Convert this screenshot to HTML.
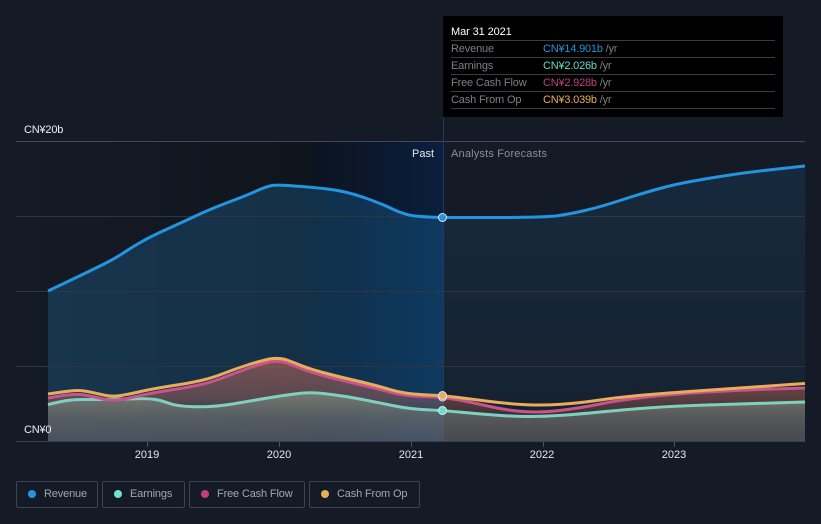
<!DOCTYPE html>
<html><head><meta charset="utf-8">
<style>
html,body{margin:0;padding:0;background:#151b26;}
body{width:821px;height:524px;overflow:hidden;position:relative;font-family:"Liberation Sans","Noto Sans CJK SC",sans-serif;}
svg{position:absolute;left:0;top:0;}
text{font-family:"Liberation Sans","Noto Sans CJK SC",sans-serif;font-size:11px;}
.b{position:absolute;top:481px;height:25px;border:1px solid #3f444e;border-radius:2px;}
.b i{position:absolute;left:11px;top:8px;width:8px;height:8px;border-radius:50%;}
.b span{position:absolute;left:27px;top:5px;font-size:11px;line-height:14px;color:#a3a6ac;white-space:nowrap;letter-spacing:-.15px;}
</style></head><body>
<svg width="821" height="524" viewBox="0 0 821 524">
<defs>
<linearGradient id="dark" x1="0" x2="1" y1="0" y2="0"><stop offset="0" stop-color="#151b26"/><stop offset="1" stop-color="#10141c"/></linearGradient>
<linearGradient id="past" x1="0" x2="1" y1="0" y2="0"><stop offset="0" stop-color="#000a19" stop-opacity=".45"/><stop offset="1" stop-color="#002352" stop-opacity=".55"/></linearGradient>
<linearGradient id="fc" x1="0" x2="0" y1="166" y2="441" gradientUnits="userSpaceOnUse"><stop offset="0" stop-color="#2394e0" stop-opacity=".12"/><stop offset="1" stop-color="#2394e0" stop-opacity=".05"/></linearGradient>
<linearGradient id="red" x1="0" x2="0" y1="358" y2="441" gradientUnits="userSpaceOnUse"><stop offset="0" stop-color="#e8785f" stop-opacity=".46"/><stop offset=".45" stop-color="#e8785f" stop-opacity=".34"/><stop offset=".68" stop-color="#e8785f" stop-opacity=".18"/><stop offset="1" stop-color="#e8785f" stop-opacity=".1"/></linearGradient>
<linearGradient id="grey" x1="0" x2="0" y1="392" y2="441" gradientUnits="userSpaceOnUse"><stop offset="0" stop-color="#7f8b7d" stop-opacity=".72"/><stop offset=".57" stop-color="#666f6c" stop-opacity=".6"/><stop offset="1" stop-color="#646870" stop-opacity=".5"/></linearGradient>
<clipPath id="cp"><rect x="48" y="141" width="395.5" height="300"/></clipPath>
<clipPath id="cf"><rect x="443.5" y="141" width="362" height="300"/></clipPath>
<path id="rf" d="M48,291 L59,285.75 Q70,280.5 82.5,274.5 Q95,268.5 105,263.5 Q115,258.5 122.5,253.5 Q130,248.5 138.5,243.5 Q147,238.5 156,234.25 Q165,230 175,225.5 Q185,221 195,216.25 Q205,211.5 215,207.5 Q225,203.5 237.5,198.75 Q250,194 257.5,190.5 Q265,187 272,185.5 Q279,184.5 294.5,186 Q310,187 327.5,189 Q345,191 362.5,197 Q380,203 392.5,209 Q405,215 415,216 Q425,217 434,217.25 Q443,217.5 494,217.5 Q545,217.5 557.5,215.75 Q570,214 585,210.5 Q600,207 620,200.5 Q640,194 657,189.25 Q674,184.5 692,181.25 Q710,178 730,175 Q750,172 777.5,169 L805,166 L805,441 L48,441 Z"/>
</defs>
<rect x="16" y="142" width="294" height="299" fill="url(#dark)"/>
<rect x="310" y="142" width="134" height="299" fill="url(#past)"/>
<!-- fills -->
<g clip-path="url(#cp)"><use href="#rf" fill="#2394e0" fill-opacity=".22"/></g>
<g clip-path="url(#cf)"><use href="#rf" fill="url(#fc)"/></g>
<!-- grid -->
<g stroke="#2f3541" stroke-width="1">
<line x1="16" x2="805" y1="216.5" y2="216.5"/>
<line x1="16" x2="805" y1="291.5" y2="291.5"/>
<line x1="16" x2="805" y1="366.5" y2="366.5"/>
</g>
<line x1="16" x2="805" y1="141.5" y2="141.5" stroke="#42485a"/>
<line x1="443.5" x2="443.5" y1="117" y2="441" stroke="#1f3a5c"/>
<path fill="url(#red)" d="M48,398 L56.5,396.5 Q65,395 72.5,394.5 Q80,394 87.5,395.5 Q95,397 103.5,399 Q112,401 121,399.5 Q130,398 138.5,396 Q147,394 158.5,392 Q170,390 180,388.5 Q190,387 201,384.5 Q212,382 223.5,377.5 Q235,373 247.5,368.5 Q260,364 269.5,362 Q279,360.5 287,363 Q295,366 302.5,369 Q310,372 325,376 Q340,380 357.5,384 Q375,388 390,392 Q405,396 424,396.5 Q443,397 456.5,399.5 Q470,402 490,406.5 Q510,411 526.5,411.75 Q543,412.5 561.5,410.25 Q580,408 600,404 Q620,400 647,397 Q674,394 707,392 Q740,390 772.5,389 L805,388 L805,441 L48,441 Z"/>
<path fill="url(#grey)" d="M48,404.5 L59,402 Q70,399.5 82.5,399.5 Q95,399.5 110,399.25 Q125,399 136,398.75 Q147,398.5 153.5,399.25 Q160,400 169,403.25 Q178,406.5 196.5,406.75 Q215,407 232.5,404 Q250,401 264.5,398.5 Q279,396 294.5,394 Q310,391.5 327.5,394 Q345,396 362.5,399.5 Q380,403 395,406 Q410,409 426.5,409.75 Q443,410.5 461.5,412.25 Q480,414 497.5,415.25 Q515,416.5 530,416.5 Q545,416.5 562.5,415.25 Q580,414 600,412 Q620,410 647,408 Q674,406 707,405 Q740,404 772.5,403 L805,402 L805,441 L48,441 Z"/>
<!-- axis -->
<line x1="16" x2="805" y1="441.5" y2="441.5" stroke="#3a404c"/>
<g stroke="#4a505c"><line x1="147.5" x2="147.5" y1="442" y2="447"/><line x1="279.5" x2="279.5" y1="442" y2="447"/><line x1="411.5" x2="411.5" y1="442" y2="447"/><line x1="543.5" x2="543.5" y1="442" y2="447"/><line x1="674.5" x2="674.5" y1="442" y2="447"/></g>
<!-- lines -->
<g fill="none" stroke-width="3" stroke-linejoin="round" stroke-linecap="butt">
<path stroke="#2394e0" d="M48,291 L59,285.75 Q70,280.5 82.5,274.5 Q95,268.5 105,263.5 Q115,258.5 122.5,253.5 Q130,248.5 138.5,243.5 Q147,238.5 156,234.25 Q165,230 175,225.5 Q185,221 195,216.25 Q205,211.5 215,207.5 Q225,203.5 237.5,198.75 Q250,194 257.5,190.5 Q265,187 272,185.5 Q279,184.5 294.5,186 Q310,187 327.5,189 Q345,191 362.5,197 Q380,203 392.5,209 Q405,215 415,216 Q425,217 434,217.25 Q443,217.5 494,217.5 Q545,217.5 557.5,215.75 Q570,214 585,210.5 Q600,207 620,200.5 Q640,194 657,189.25 Q674,184.5 692,181.25 Q710,178 730,175 Q750,172 777.5,169 L805,166"/>
<path stroke="#7fd0bd" d="M48,404.5 L59,402 Q70,399.5 82.5,399.5 Q95,399.5 110,399.25 Q125,399 136,398.75 Q147,398.5 153.5,399.25 Q160,400 169,403.25 Q178,406.5 196.5,406.75 Q215,407 232.5,404 Q250,401 264.5,398.5 Q279,396 294.5,394 Q310,391.5 327.5,394 Q345,396 362.5,399.5 Q380,403 395,406 Q410,409 426.5,409.75 Q443,410.5 461.5,412.25 Q480,414 497.5,415.25 Q515,416.5 530,416.5 Q545,416.5 562.5,415.25 Q580,414 600,412 Q620,410 647,408 Q674,406 707,405 Q740,404 772.5,403 L805,402"/>
<path stroke="#c9548b" d="M48,398 L56.5,396.5 Q65,395 72.5,394.5 Q80,394 87.5,395.5 Q95,397 103.5,399 Q112,401 121,399.5 Q130,398 138.5,396 Q147,394 158.5,392 Q170,390 180,388.5 Q190,387 201,384.5 Q212,382 223.5,377.5 Q235,373 247.5,368.5 Q260,364 269.5,362 Q279,360.5 287,363 Q295,366 302.5,369 Q310,372 325,376 Q340,380 357.5,384 Q375,388 390,392 Q405,396 424,396.5 Q443,397 456.5,399.5 Q470,402 490,406.5 Q510,411 526.5,411.75 Q543,412.5 561.5,410.25 Q580,408 600,404 Q620,400 647,397 Q674,394 707,392 Q740,390 772.5,389 L805,388"/>
<path stroke="#e8ad5a" d="M48,394 L56.5,392.75 Q65,391.5 72.5,390.75 Q80,390 87.5,391.5 Q95,393 103.5,395 Q112,397 121,395.5 Q130,394 138.5,392 Q147,390 158.5,388 Q170,386 180,384.5 Q190,383 201,380.5 Q212,378 223.5,373.5 Q235,369 247.5,365 Q260,361 269.5,359 Q279,357.5 287,360 Q295,363 302.5,366 Q310,369 325,373 Q340,377 357.5,381 Q375,385 390,389.5 Q405,394 424,394.75 Q443,395.5 456.5,397.25 Q470,399 490,401.5 Q510,404 526.5,404.75 Q543,405.5 561.5,404.25 Q580,403 600,400 Q620,397 647,394.75 Q674,392.5 707,390.25 Q740,388 772.5,385.75 L805,383.5"/>
</g>
<!-- markers -->
<circle cx="442.5" cy="217.5" r="4" fill="#2394e0" stroke="#dfe8f2" stroke-width="1"/>
<circle cx="442.5" cy="397" r="4" fill="#c9548b" stroke="#dfe0ee" stroke-width="1"/>
<circle cx="442.5" cy="395.5" r="4" fill="#e8ad5a" stroke="#dfe0e0" stroke-width="1"/>
<circle cx="442.5" cy="410.5" r="4" fill="#62e0d2" stroke="#dff0f0" stroke-width="1"/>
<!-- labels -->
<text x="24" y="133" fill="#eceef0" letter-spacing="-.2">CN¥20b</text>
<text x="24" y="433" fill="#eceef0" letter-spacing="-.2">CN¥0</text>
<text x="412" y="157" fill="#e6e8ec">Past</text>
<text x="451" y="157" fill="#8a8e95" letter-spacing=".18">Analysts Forecasts</text>
<g fill="#e4e6ea" text-anchor="middle"><text x="147" y="458">2019</text><text x="279" y="458">2020</text><text x="411" y="458">2021</text><text x="542" y="458">2022</text><text x="674" y="458">2023</text></g>
<!-- tooltip -->
<rect x="443" y="16" width="340" height="101" fill="#000"/>
<g stroke="#3c3c3c"><line x1="451" x2="775" y1="40.5" y2="40.5"/><line x1="451" x2="775" y1="57.5" y2="57.5"/><line x1="451" x2="775" y1="74.5" y2="74.5"/><line x1="451" x2="775" y1="91.5" y2="91.5"/><line x1="451" x2="775" y1="108.5" y2="108.5"/></g>
<text x="451" y="35" fill="#fff" letter-spacing="-.1">Mar 31 2021</text>
<g fill="#7c7f84" letter-spacing="-.15">
<text x="451" y="52">Revenue</text><text x="451" y="69">Earnings</text><text x="451" y="86">Free Cash Flow</text><text x="451" y="103">Cash From Op</text>
</g>
<text x="543" y="52" fill="#2394e0" letter-spacing="-.2">CN¥14.901b <tspan fill="#7c7f84">/yr</tspan></text>
<text x="543" y="69" fill="#62dcc8" letter-spacing="-.2">CN¥2.026b <tspan fill="#7c7f84">/yr</tspan></text>
<text x="543" y="86" fill="#c0407f" letter-spacing="-.2">CN¥2.928b <tspan fill="#7c7f84">/yr</tspan></text>
<text x="543" y="103" fill="#e8ad5a" letter-spacing="-.2">CN¥3.039b <tspan fill="#7c7f84">/yr</tspan></text>
</svg>
<div class="b" style="left:16px;width:80px"><i style="background:#2394e0"></i><span>Revenue</span></div>
<div class="b" style="left:102px;width:81px"><i style="background:#6fe3d0"></i><span>Earnings</span></div>
<div class="b" style="left:189px;width:114px"><i style="background:#c0407f"></i><span>Free Cash Flow</span></div>
<div class="b" style="left:309px;width:109px"><i style="background:#e8ad5a"></i><span>Cash From Op</span></div>
</body></html>
